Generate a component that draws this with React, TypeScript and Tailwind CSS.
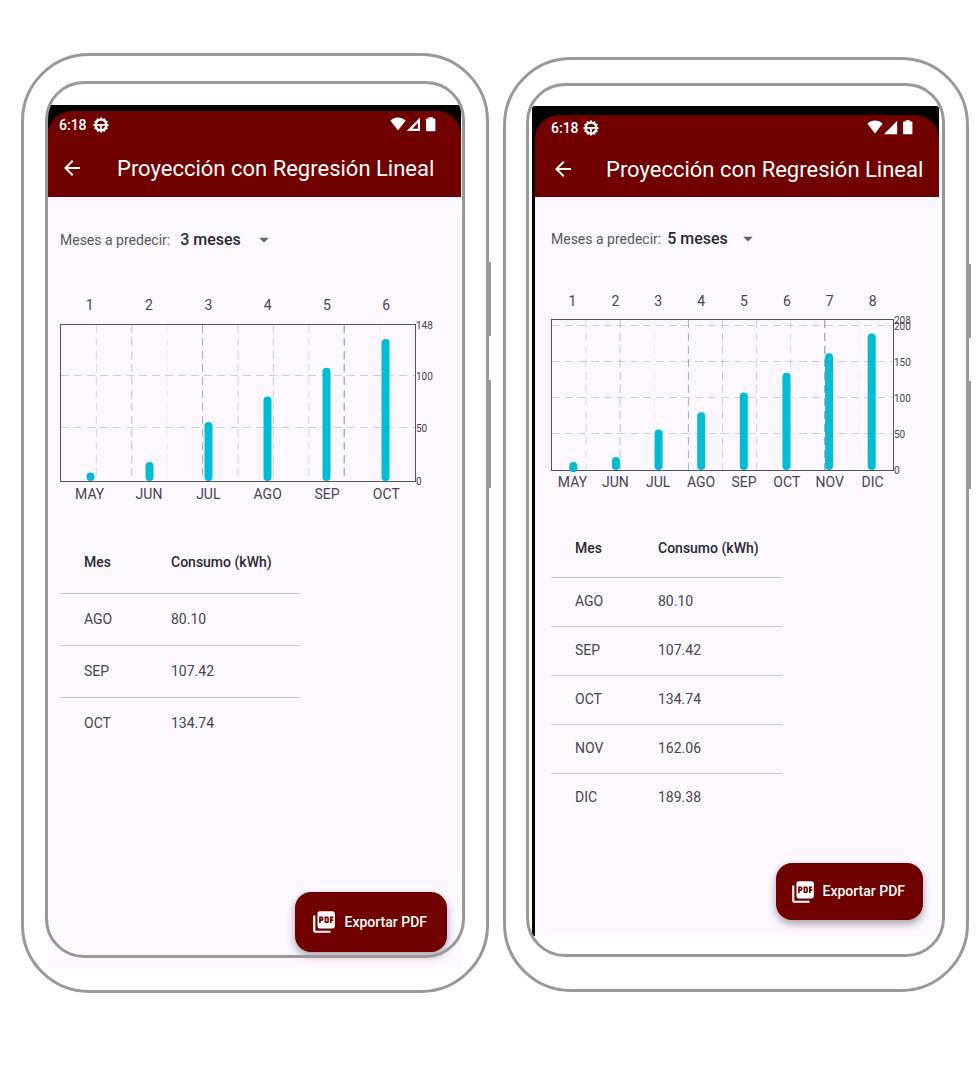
import { useState } from "react";
import { MdArrowBack, MdPictureAsPdf } from "react-icons/md";

type Month = { name: string; value: number };

const ALL: Month[] = [
  { name: "MAY", value: 8 },
  { name: "JUN", value: 18 },
  { name: "JUL", value: 56 },
  { name: "AGO", value: 80.1 },
  { name: "SEP", value: 107.42 },
  { name: "OCT", value: 134.74 },
  { name: "NOV", value: 162.06 },
  { name: "DIC", value: 189.38 },
];

const GRID_OPACITY = [0.3, 0.5, 0.12, 0.75, 0.4, 0.4, 0.3, 1, 0.12];

const LARGE = {
  frame: "mt-[53px] h-fit pt-[49px] pb-[23px] pl-[24px] pr-[25px]",
  inner: "top-[25px] bottom-[32px] left-[21px] right-[21px]",
  keyOne: "top-[206px] h-[74px]",
  keyTwo: "top-[324px] h-[108px]",
  screen: "min-h-[862px] rounded-t-[3px]",
  bezel: "bg-black pt-[6px]",
  status: "h-[28px] pl-[11px] pr-[25px]",
  clock: "gap-[6px]",
  bar: "h-[58px] pl-[12px] gap-[33px]",
  body: "pl-[12px] pr-[45px] pt-[19px]",
  picker: "h-[48px] gap-[10px]",
  select: "pr-[28px]",
  chart: "mt-[31px]",
  top: "mb-[9px]",
  bottom: "mt-[2px]",
  table: "mt-[29px] w-[240px]",
  head: "h-[60px]",
  row: "h-[52px]",
  first: "pl-[24px] w-[111px]",
  fab: "h-[60px] pl-[16px] pr-[20px] mr-[14px] mb-[15px] gap-[8px]",
  plot: 158,
};

const SMALL: typeof LARGE = {
  frame: "mt-[57px] h-fit pt-[46px] pb-[53px] pl-[26px] pr-[27px]",
  inner: "top-[23px] bottom-[32px] left-[20px] right-[21px]",
  keyOne: "top-[204px] h-[74px]",
  keyTwo: "top-[321px] h-[108px]",
  screen: "min-h-[830px] rounded-t-[3px] border-l-[3px] border-black",
  bezel: "bg-black pt-[9px]",
  status: "h-[26px] pl-[16px] pr-[26px]",
  clock: "gap-[4px]",
  bar: "h-[56px] pl-[16px] gap-[31px]",
  body: "pl-[16px] pr-[45px] pt-[19px]",
  picker: "h-[46px] gap-[6px]",
  select: "pr-[25px]",
  chart: "mt-[29px]",
  top: "mb-[8px]",
  bottom: "mt-[1px]",
  table: "mt-[28px] w-[231px]",
  head: "h-[57px]",
  row: "h-[49px]",
  first: "pl-[24px] w-[107px]",
  fab: "h-[57px] pl-[14px] pr-[18px] mr-[16px] mb-[16px] gap-[7px]",
  plot: 152,
};

function GearIcon() {
  const teeth = Array.from({ length: 12 }, (_, i) => i * 30);
  return (
    <svg viewBox="0 0 16 16" className="size-[16px]" aria-hidden="true">
      <circle cx="8" cy="8" r="5.4" fill="none" stroke="white" strokeWidth="2.3" />
      {teeth.map((a) => (
        <rect key={a} x="7" y="0.5" width="2" height="2" fill="white" transform={`rotate(${a} 8 8)`} />
      ))}
      <path d="M3 6.9h10v1.8H9.8L8.8 10v3H7.2v-3l-1-1.3H3z" fill="white" />
    </svg>
  );
}

function StatusIcons({ weak }: { weak: boolean }) {
  return (
    <svg viewBox="0 0 46 16" className="h-[16px] w-[46px]" aria-hidden="true">
      <path d="M0.3 3.4C4.8 -0.5 11.2 -0.5 15.7 3.4L8 13.6z" fill="white" />
      {weak ? (
        <path d="M30 0.6V14H16.7z M27.9 5.8L22.4 11.8H27.9z" fill="white" fillRule="evenodd" />
      ) : (
        <path d="M30.2 0.8V14.2H16.9z" fill="white" />
      )}
      <path d="M37 1.4h1.6V0.3h4.2v1.1h1.6q1 0 1 1v10.8q0 1-1 1h-7.4q-1 0-1-1V2.4q0-1 1-1z" fill="white" />
    </svg>
  );
}

function Chart({ months, max, look }: { months: Month[]; max: number; look: typeof LARGE }) {
  const inside = look.plot - 2;
  const y = (v: number) => inside * (1 - v / max);
  const lines = [50, 100, 150, 200].filter((v) => v < max);
  return (
    <section className={look.chart} aria-label="Consumo mensual">
      <div className={`flex h-[20px] items-center text-[14px] text-[#49454f] ${look.top}`}>
        {months.map((m, i) => (
          <span key={m.name} className="flex-1 text-center">{i + 1}</span>
        ))}
      </div>
      <div className="relative border border-[#55525a]">
        <svg width="100%" height={inside} className="block overflow-visible">
          {GRID_OPACITY.map((o, i) => (
            <line key={i} x1={`${(i + 1) * 10}%`} x2={`${(i + 1) * 10}%`} y1="0" y2={inside} stroke="#7d929e" strokeOpacity={o} strokeDasharray="8 5" />
          ))}
          {lines.map((v) => (
            <line key={v} x1="0" x2="100%" y1={Math.round(y(v)) - 0.5} y2={Math.round(y(v)) - 0.5} stroke="#7d929e" strokeOpacity="0.4" strokeDasharray="8 5" />
          ))}
          {months.map((m, i) => {
            const x = `${((i + 0.5) * 100) / months.length}%`;
            return <line key={m.name} x1={x} x2={x} y1={inside - 4} y2={y(m.value) + 4} stroke="#00bcd4" strokeWidth="8" strokeLinecap="round" />;
          })}
        </svg>
        {[0, ...lines, max].map((v) => (
          <span key={v} className="absolute left-full -translate-y-1/2 pl-px text-[10px] leading-none text-[#49454f]" style={{ top: Math.round(y(v)) + 1 }}>
            {v}
          </span>
        ))}
      </div>
      <div className={`flex h-[20px] items-center text-[14px] text-[#49454f] ${look.bottom}`}>
        {months.map((m) => (
          <span key={m.name} className="flex-1 text-center">{m.name}</span>
        ))}
      </div>
    </section>
  );
}

function Phone({ id, initial, max, weak, look }: { id: string; initial: number; max: number; weak: boolean; look: typeof LARGE }) {
  const [count, setCount] = useState(initial);
  const months = ALL.slice(0, 3 + count);
  const top = count === initial ? max : Math.round(months[months.length - 1].value * 1.1);
  return (
    <article className={`relative rounded-[68px] border-[3px] border-[#999a96] ${look.frame}`}>
      <div className={`flex flex-col overflow-hidden bg-[#fdf7ff] ${look.screen}`}>
        <div className={look.bezel}>
          <header className="rounded-t-[24px] bg-[#700000] text-white">
            <div className={`flex items-center justify-between ${look.status}`}>
              <span className={`flex items-center text-[14px] font-medium ${look.clock}`}>
                6:18
                <GearIcon />
              </span>
              <StatusIcons weak={weak} />
            </div>
            <div className={`flex items-center ${look.bar}`}>
              <button type="button" aria-label="Volver" className="shrink-0">
                <MdArrowBack className="size-[24px]" />
              </button>
              <h1 className="whitespace-nowrap text-[22px]">Proyección con Regresión Lineal</h1>
            </div>
          </header>
        </div>

        <main className={look.body}>
          <div className={`flex items-center ${look.picker}`}>
            <label htmlFor={id} className="whitespace-nowrap text-[14px] text-[#5a5660]">Meses a predecir:</label>
            <div className="relative">
              <select
                id={id}
                value={count}
                onChange={(e) => setCount(Number(e.target.value))}
                className={`appearance-none bg-transparent text-[16px] font-medium text-[#2b2930] outline-none ${look.select}`}
              >
                {[1, 2, 3, 4, 5].map((n) => (
                  <option key={n} value={n}>{n === 1 ? "1 mes" : `${n} meses`}</option>
                ))}
              </select>
              <svg viewBox="0 0 10 5" className="pointer-events-none absolute right-0 top-1/2 h-[5px] w-[10px] -translate-y-1/2" aria-hidden="true">
                <path d="M0 0h10L5 5z" fill="#616161" />
              </svg>
            </div>
          </div>

          <Chart months={months} max={top} look={look} />

          <table className={`border-collapse text-left text-[14px] text-[#49454f] ${look.table}`}>
            <thead>
              <tr className={`text-[#2b2930] ${look.head}`}>
                <th className={`font-medium ${look.first}`}>Mes</th>
                <th className="whitespace-nowrap font-medium">Consumo (kWh)</th>
              </tr>
            </thead>
            <tbody>
              {months.slice(3).map((m) => (
                <tr key={m.name} className={`border-t border-[#cbc6ce] ${look.row}`}>
                  <td className={look.first}>{m.name}</td>
                  <td>{m.value.toFixed(2)}</td>
                </tr>
              ))}
            </tbody>
          </table>
        </main>

        <button
          type="button"
          className={`mt-auto flex items-center self-end whitespace-nowrap rounded-[16px] bg-[#700000] text-[14px] font-medium text-white shadow-[0_4px_8px_rgba(0,0,0,0.35)] ${look.fab}`}
        >
          <MdPictureAsPdf className="size-[26px]" />
          Exportar PDF
        </button>
      </div>
      <div className={`pointer-events-none absolute rounded-[39px] border-[3px] border-[#999a96] ${look.inner}`} />
      <div className={`absolute -right-[5px] w-[3px] bg-[#999a96] ${look.keyOne}`} />
      <div className={`absolute -right-[5px] w-[3px] bg-[#999a96] ${look.keyTwo}`} />
    </article>
  );
}

export default function App() {
  return (
    <div className="grid min-h-screen grid-cols-[468fr_466fr] gap-[14px] overflow-hidden bg-white pl-[21px] pr-[9px] font-[Roboto,sans-serif]">
      <Phone id="meses-a" initial={3} max={148} weak look={LARGE} />
      <Phone id="meses-b" initial={5} max={208} weak={false} look={SMALL} />
    </div>
  );
}
